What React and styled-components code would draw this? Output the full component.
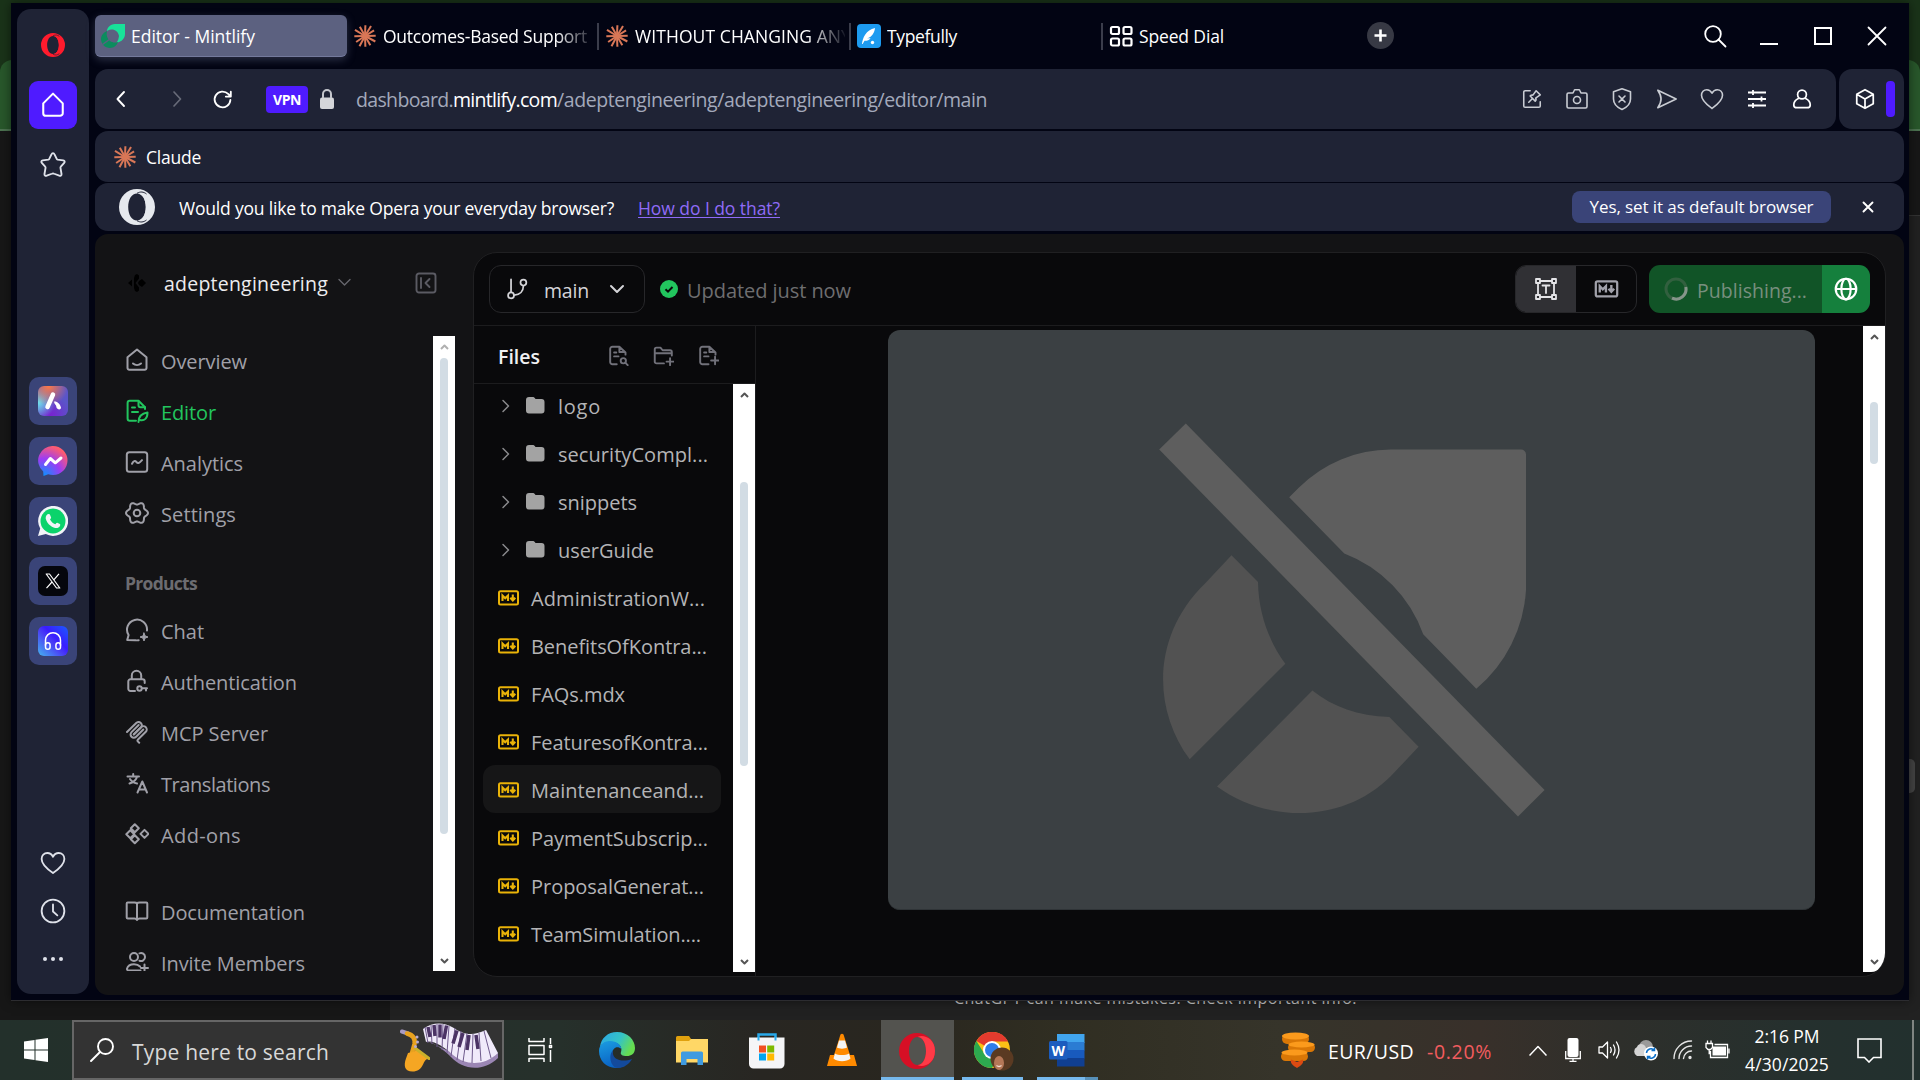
import React, { useLayoutEffect, useRef, useState } from "react";
import styled, { createGlobalStyle, css } from "styled-components";

const Global = createGlobalStyle`
  * { box-sizing: border-box; }
  html, body { margin: 0; background: #171717; overflow: hidden; }
  body { font-family: "Open Sans", "Noto Sans", sans-serif; }
  svg { display: block; flex: none; }
`;

/* ---------- text ---------- */

const TextBox = styled.span`
  display: inline-block;
  flex: none;
  white-space: pre;
  font-size: ${(p) => p.$size || 20}px;
  line-height: ${(p) => p.$line || 28}px;
  font-weight: ${(p) => p.$weight || 400};
  color: ${(p) => p.$color || "inherit"};
  text-decoration: ${(p) => (p.$underline ? "underline" : "none")};
  text-decoration-thickness: 1px;
  text-underline-offset: 2px;
  position: relative;
  top: ${(p) => p.$dy || 0}px;
`;

/* Tracks the letters so that the label takes the given width. */
function Label({ width, children, size, line, weight, color, underline, dy }) {
  const ref = useRef(null);
  const [tracking, setTracking] = useState(0);
  useLayoutEffect(() => {
    const natural = ref.current.getBoundingClientRect().width;
    const count = ref.current.textContent.length;
    if (width) setTracking((width - natural) / count);
  }, [width]);
  return (
    <TextBox
      ref={ref}
      $size={size}
      $line={line}
      $weight={weight}
      $color={color}
      $underline={underline}
      $dy={dy}
      style={{ letterSpacing: tracking }}
    >
      {children}
    </TextBox>
  );
}

/* ---------- icons ---------- */

const Line = ({ s = 24, h, vb = "0 0 24 24", w = 1.8, c = "currentColor", children, cap = "round" }) => (
  <svg width={s} height={h || s} viewBox={vb} fill="none" stroke={c} strokeWidth={w} strokeLinecap={cap} strokeLinejoin="round">
    {children}
  </svg>
);

const Burst = () => (
  <Line s={24} w={2} c="#d97757" cap="butt">
    {[2, 31, 58, 88, 118, 150, 178, 208, 236, 268, 301, 331].map((a, i) => (
      <path key={a} d={`M12 12 L12 ${i % 3 === 1 ? 0.3 : 1.3}`} transform={`rotate(${a} 12 12)`} />
    ))}
  </Line>
);

const OperaRing = ({ s, c, inner = c }) => (
  <svg width={s} height={s} viewBox="0 0 36 36">
    <path fillRule="evenodd" fill={c} d="M18 0a18 18 0 1 0 0 36a18 18 0 1 0 0-36zM18 4.500c5.200 0 8.800 5.800 8.800 13.500S23.200 31.500 18 31.500S9.200 25.700 9.200 18S12.800 4.500 18 4.500z" />
    <path fill="none" stroke="#1f2335" strokeWidth="1" d="M18 4.300c3.500-2 6.500-1.600 9.500.7M18 31.700c3.500 2 6.500 1.600 9.500-.7" />
    <path fill={inner} d="M18 4.500c5.200 0 8.800 5.800 8.800 13.500S23.200 31.500 18 31.500c9 0 14-6 14-13.500S27 4.500 18 4.500z" />
  </svg>
);

const MintFav = () => (
  <svg width="24" height="24" viewBox="0 0 24 24">
    <path d="M24 0H14C9 0 6 4 6 7c5-3 11-1 12 5c-.5 3-1 5-2.500 6.500C21 18 24 14 24 10z" fill="#18e299" />
    <path d="M6 7C2 8.500 0 12 0 15c0 5 4 9 9 9c4 0 7-3 8-6c-3 1-6 .5-8-1c-3-2.500-4-6-3-10z" fill="#0c8c5e" />
    <path d="M1.500 20.500L9 15" stroke="#5b6180" strokeWidth="1.500" />
  </svg>
);

const Feather = () => (
  <svg width="24" height="24" viewBox="0 0 24 24">
    <rect width="24" height="24" rx="4" fill="#1d9bf0" />
    <path d="M5 20c.5-6 4-14 13-16c-.5 5-3 9-8 10.500c2-.2 3-.2 3.500 0c-1.500 1.700-3.500 2.500-6 2.300L5.700 20z" fill="#fff" />
    <circle cx="15.500" cy="18.500" r="1.700" fill="#fff" />
  </svg>
);

const MdIcon = ({ s = 21, h = 16, c }) => (
  <svg width={s} height={h} viewBox="0 0 21 16" fill="none" stroke={c} strokeWidth="2">
    <rect x="1" y="1.200" width="19" height="13.300" rx="1.500" strokeWidth="2" />
    <path d="M4.500 11V5.500L7.200 8.300L10 5.500V11" strokeWidth="2.100" />
    <path d="M14.800 4.500V10M12.300 7.800l2.500 2.700L17.300 7.800" strokeWidth="2.100" />
  </svg>
);

/* Six-lobed outline of the settings gear. */
const gearOutline =
  Array.from({ length: 72 }, (_, i) => {
    const a = (i * Math.PI) / 36;
    const r = 9.700 + 1.300 * Math.cos(6 * a);
    return `${i ? "L" : "M"}${(12 + r * Math.cos(a)).toFixed(2)} ${(12 + r * Math.sin(a)).toFixed(2)}`;
  }).join("") + "z";

const NavIcons = {
  overview: (
    <>
      <path d="M2.500 9.200L12 1.500l9.500 7.700V20a1.800 1.800 0 0 1-1.800 1.800H4.300A1.800 1.800 0 0 1 2.500 20z" />
      <path d="M8 15.500c2.300 2 5.700 2 8 0" />
    </>
  ),
  editor: (
    <>
      <path d="M11 21.800H4.800A2.200 2.200 0 0 1 2.600 19.600V4A2.200 2.200 0 0 1 4.800 1.800h8.700L20 8.300V10" />
      <path d="M13.500 2.200V6.300a2 2 0 0 0 2 2H20M7 8.500h3M7 13h6" />
      <path d="M13.500 23c0-4 2-8.500 9-9.500c0 6-3 8.500-7.500 7.500" />
    </>
  ),
  analytics: (
    <>
      <rect x="1.800" y="2.200" width="20.400" height="19.600" rx="2.500" />
      <path d="M7 13.800c1.500-3 3-3.600 4.500-1.700s3 .6 5.500-2" />
    </>
  ),
  settings: (
    <>
      <circle cx="12" cy="12" r="3.300" />
      <path d={gearOutline} />
    </>
  ),
  chat: (
    <>
      <path d="M22 12.500A10 10 0 1 0 3.600 17L2.200 22l8 .2c1.200.3 2.300.2 3.500 0" />
      <path d="M19 15l1.100 2.900L23 19l-2.900 1.100L19 23l-1.100-2.900L15 19l2.900-1.100z" fill="currentColor" strokeWidth="1" />
    </>
  ),
  auth: (
    <>
      <path d="M6.800 10V6.500a4.700 4.700 0 0 1 9.400 0V10M10 22H5.500A2.200 2.200 0 0 1 3.300 19.800V12.500A2.200 2.200 0 0 1 5.500 10.300h12A2.200 2.200 0 0 1 19.700 12.500V14" />
      <circle cx="14.500" cy="19.500" r="2.200" />
      <path d="M17 19.200h5M21 19.500v2" />
    </>
  ),
  mcp: (
    <>
      <path d="M2 12L11.500 2.800a3.200 3.200 0 0 1 4.500 4.500L8.700 14.500" />
      <path d="M9 14.300L16.200 7.200a3.200 3.200 0 0 1 4.600 4.600L13 19.500c-.8.8-.8 1.300 0 2.100l1.200 1.200" />
      <path d="M13.700 5L6.500 12.100a3.200 3.200 0 0 0 4.600 4.600l7.200-7.200" />
    </>
  ),
  translate: (
    <>
      <path d="M2.500 5.500h11.500M8.200 3v2.500M4.500 12.500C9 11 11.500 8.500 12 5.500M5 8c1.500 2.500 4 4 7 4.500" />
      <path d="M12.500 21.500L17.300 10.500L22 21.500M14 18.500h6.600" />
    </>
  ),
  addons: (
    <>
      <path d="M9.500 2.500l4 4l-4 4l-4-4zM5 8.500l4 4l-4 4l-4-4zM9.500 13.500l4 4l-4 4l-4-4zM19.200 8.200l4 4l-4 4l-4-4z" transform="translate(.3 -.3)" />
    </>
  ),
  docs: (
    <>
      <path d="M12 4.500c-.5-.8-1.500-1-2.500-1H2.700a1 1 0 0 0-1 1V18.500a1 1 0 0 0 1 1H9.500c1 0 2 .7 2.500 1.500c.5-.8 1.500-1.500 2.500-1.500h6.800a1 1 0 0 0 1-1V4.500a1 1 0 0 0-1-1H14.500c-1 0-2 .2-2.500 1zM12 4.500V21" />
    </>
  ),
  invite: (
    <>
      <circle cx="9" cy="7" r="4" />
      <path d="M14.500 3.300a4 4 0 1 1 0 7.400M15.500 20.500H3.500a1.500 1.500 0 0 1-1.500-1.800c.8-3 3.600-4.500 7-4.500c2.500 0 4.700.8 6 2.300M19.500 14.500v7M16 18h7" />
    </>
  ),
};

/* ---------- desktop and the page behind the window ---------- */

const Desktop = styled.div`
  width: 1920px;
  height: 1080px;
  overflow: hidden;
  display: flex;
  flex-direction: column;
  position: relative;
`;
const Behind = styled.div`
  height: 1020px;
  display: flex;
  flex-direction: column;
`;
const BehindTop = styled.div`
  height: 131px;
  padding-top: 60px;
  background: #1a3319;
`;
const BehindToolbar = styled.div`
  height: 71px;
  border-radius: 12px 12px 0 0;
  background: #28572b;
  border-bottom: 2px solid #4c7350;
`;
const BehindBody = styled.div`
  flex: 1;
  display: flex;
  align-items: stretch;
`;
const BehindAside = styled.div`
  width: 390px;
  background: #171717;
`;
const BehindChat = styled.div`
  flex: 1;
  background: #212121;
  display: flex;
  align-items: flex-end;
  padding: 0 0 10px 564px;
`;
const BehindScroll = styled.div`
  width: 11px;
  background: #212121;
  border-top: 1px solid #333;
  margin-top: 84px;
  padding-top: 543px;
`;
const BehindThumb = styled.div`
  width: 6px;
  height: 34px;
  border-radius: 0 5px 5px 0;
  background: #444;
`;

const Window = styled.div`
  position: absolute;
  left: 11px;
  top: 3px;
  width: 1898px;
  height: 998px;
  background: #020413;
  border-bottom: 1px solid #2c2c30;
  box-shadow: 0 0 10px rgba(0, 0, 0, 0.5);
  padding: 0 5px 5px 6px;
  display: flex;
  gap: 6px;
`;

/* ---------- opera side bar ---------- */

const Rail = styled.div`
  width: 72px;
  height: 985px;
  margin-top: 6px;
  border-radius: 14px;
  background: #1f2335;
  color: #dfe2ea;
  display: flex;
  flex-direction: column;
  align-items: center;
  padding-bottom: 11px;
`;
const RailCell = styled.div`
  width: 48px;
  height: ${(p) => p.$h || 48}px;
  display: flex;
  align-items: center;
  justify-content: center;
`;
const RailHome = styled(RailCell)`
  background: #4f1bff;
  border-radius: 9px;
  margin-bottom: 12px;
  color: #fff;
`;
const RailApps = styled.div`
  margin: 188px 0 auto;
  display: flex;
  flex-direction: column;
  gap: 12px;
`;
const AppTile = styled(RailCell)`
  background: #3a4478;
  border-radius: 10px;
`;
const AppArt = styled.div`
  width: 30px;
  height: 30px;
  border-radius: ${(p) => p.$r ?? 6}px;
  background: ${(p) => p.$bg || "none"};
  display: flex;
  align-items: center;
  justify-content: center;
  overflow: hidden;
`;

/* ---------- browser chrome ---------- */

const Main = styled.div`
  width: 1809px;
  display: flex;
  flex-direction: column;
`;
const TabStrip = styled.div`
  height: 66px;
  padding-top: 12px;
  display: flex;
  color: #fff;
`;
const Tab = styled.div`
  width: 252px;
  height: 42px;
  padding-left: 6px;
  display: flex;
  align-items: center;
  gap: 6px;
  margin-right: ${(p) => (p.$last ? 12 : 0)}px;
  ${(p) =>
    p.$active &&
    css`
      background: #5c6180;
      border-radius: 6px;
      border-bottom: 1px solid #747a9c;
      box-shadow: 0 3px 9px rgba(92, 97, 128, 0.45);
    `}
  ${(p) =>
    p.$divided &&
    css`
      background: linear-gradient(#3b3d4b, #3b3d4b) right 0 center / 2px 27px no-repeat;
    `}
`;
const TabText = styled.div`
  width: ${(p) => (p.$fade ? 210 : 150)}px;
  overflow: hidden;
  display: flex;
  ${(p) => p.$fade && css`mask-image: linear-gradient(90deg, #000 172px, transparent 213px);`}
`;
const NewTab = styled.div`
  width: 27px;
  height: 27px;
  margin: 7px auto 0 0;
  border-radius: 50%;
  background: #373944;
  display: flex;
  align-items: center;
  justify-content: center;
`;
const Control = styled.div`
  width: 54px;
  height: 42px;
  display: flex;
  align-items: center;
  justify-content: center;
`;
const AddressRow = styled.div`
  display: flex;
  gap: 3px;
  height: 62px;
`;
const Bar = styled.div`
  height: ${(p) => p.$h}px;
  flex: ${(p) => (p.$w ? "none" : 1)};
  width: ${(p) => (p.$w ? p.$w + "px" : "auto")};
  border-radius: 13px;
  background: #1f2335;
  display: flex;
  align-items: center;
  color: #fff;
`;
const Gap = styled.div`
  flex: none;
  width: ${(p) => p.$w}px;
`;
const Push = styled.div`
  flex: 1;
`;
const Vpn = styled.div`
  width: 42px;
  height: 27px;
  border-radius: 4px;
  background: #4f1bff;
  display: flex;
  align-items: center;
  justify-content: center;
`;
const Tool = styled.div`
  width: 45px;
  display: flex;
  justify-content: center;
  color: ${(p) => (p.$bright ? "#fff" : "#c9ccd3")};
`;
const PurpleMark = styled.div`
  width: 9px;
  height: 36px;
  border-radius: 4px;
  background: #4f1bff;
`;
const BookmarkRow = styled.div`
  height: 52px;
  display: flex;
`;
const BannerRow = styled.div`
  height: 51px;
  display: flex;
`;
const BannerButton = styled.div`
  width: 259px;
  height: 32px;
  margin-bottom: 1px;
  border-radius: 8px;
  background: #3a4478;
  display: flex;
  align-items: center;
  justify-content: center;
`;

/* ---------- page ---------- */

const Page = styled.div`
  height: 761px;
  border-radius: 13px;
  background: #131315;
  display: flex;
`;
const Side = styled.div`
  width: 378px;
  padding: 0 18px 0 30px;
`;
const Org = styled.div`
  height: 102px;
  display: flex;
  align-items: center;
  padding: 0 0 5px 3px;
  color: #ececee;
`;
const SideScroll = styled.div`
  height: 635px;
  display: flex;
  justify-content: space-between;
  overflow: hidden;
`;
const Nav = styled.div`
  display: flex;
  flex-direction: column;
`;
const NavItem = styled.div`
  height: 51px;
  flex: none;
  display: flex;
  align-items: center;
  gap: 12px;
  color: ${(p) => (p.$on ? "#22c55e" : "#a0a0a8")};
  & > svg {
    margin-top: -4px;
  }
`;
const NavHeading = styled.div`
  height: 66px;
  flex: none;
  padding-top: 28px;
`;
const NavBreak = styled.div`
  height: 26px;
  flex: none;
`;
const Track = styled.div`
  width: 22px;
  flex: none;
  height: ${(p) => p.$h}px;
  background: #fff;
  border-radius: 0 0 ${(p) => p.$r || 0}px 0;
  display: flex;
  flex-direction: column;
  align-items: center;
  justify-content: space-between;
  padding: 8px 0 7px;
`;
const Thumb = styled.div`
  width: 8px;
  height: ${(p) => p.$h}px;
  margin: ${(p) => p.$top}px 1px auto 0;
  border-radius: 4px;
  background: #d2dce4;
`;

const Editor = styled.div`
  width: 1413px;
  height: 725px;
  margin-top: 18px;
  border: 1px solid #202022;
  border-radius: 24px;
  background: #09090b;
  overflow: hidden;
`;
const EditorHead = styled.div`
  height: 73px;
  border-bottom: 1px solid #1c1c1e;
  display: flex;
  align-items: center;
  padding: 0 15px 1px 15px;
`;
const Branch = styled.div`
  width: 156px;
  height: 48px;
  border: 1px solid #27272a;
  border-radius: 12px;
  display: flex;
  align-items: center;
  padding-left: 16px;
  color: #d4d4d8;
`;
const Toggle = styled.div`
  width: 122px;
  height: 48px;
  border: 1px solid #27272a;
  border-radius: 11px;
  overflow: hidden;
  display: flex;
`;
const ToggleCell = styled.div`
  flex: 1;
  display: flex;
  align-items: center;
  justify-content: center;
  background: ${(p) => (p.$on ? "#303034" : "transparent")};
  color: ${(p) => (p.$on ? "#e4e4e7" : "#a1a1aa")};
`;
const Publish = styled.div`
  width: 221px;
  height: 48px;
  border-radius: 11px;
  overflow: hidden;
  display: flex;
`;
const PublishText = styled.div`
  width: 173px;
  background: #115427;
  display: flex;
  align-items: center;
  gap: 9px;
  padding-left: 15px;
`;
const PublishGlobe = styled.div`
  flex: 1;
  background: #15803d;
  color: #fff;
  display: flex;
  align-items: center;
  justify-content: center;
`;
const EditorBody = styled.div`
  height: 651px;
  display: flex;
`;
const Files = styled.div`
  width: 282px;
  border-right: 1px solid #1c1c1e;
`;
const FilesHead = styled.div`
  height: 58px;
  border-bottom: 1px solid #1c1c1e;
  display: flex;
  align-items: center;
  padding: 1px 0 0 24px;
  color: #71717a;
`;
const FilesScroll = styled.div`
  height: 588px;
  display: flex;
  justify-content: space-between;
  overflow: hidden;
`;
const FileList = styled.div`
  width: 238px;
  margin: -3px 0 0 9px;
`;
const FileRow = styled.div`
  height: 48px;
  border-radius: 12px;
  display: flex;
  align-items: center;
  padding-left: ${(p) => (p.$folder ? 18 : 15)}px;
  background: ${(p) => (p.$on ? "#161617" : "transparent")};
  color: #b4b4b6;
  & > svg {
    margin-top: 1px;
  }
`;
const Canvas = styled.div`
  flex: 1;
  display: flex;
  justify-content: space-between;
  padding: 4px 0 0 132px;
`;
const Picture = styled.div`
  width: 927px;
  height: 580px;
  border-radius: 12px;
  background: #3b4043;
  border-bottom: 1px solid #2f3437;
  overflow: hidden;
`;
const CanvasTrack = styled.div`
  margin-top: -4px;
`;

/* ---------- taskbar ---------- */

const Taskbar = styled.div`
  height: 60px;
  display: flex;
  background: linear-gradient(90deg, #23302b 0, #26302b 560px, #282622 760px, #29261f 900px, #302e22 1060px, #36342a 1280px, #38302a 1480px, #2e2f2b 1620px, #25302e 1800px, #22302e 1920px);
  color: #fff;
`;
const Start = styled.div`
  width: 72px;
  display: flex;
  align-items: center;
  justify-content: center;
`;
const SearchBox = styled.div`
  width: 432px;
  border: 2px solid #666;
  background: #333;
  display: flex;
  align-items: center;
  padding-left: 16px;
`;
const SearchArt = styled.div`
  display: flex;
  align-items: center;
  & > svg + svg {
    margin: -8px 0 0 -7px;
  }
`;
const TaskCell = styled.div`
  width: ${(p) => p.$w || 75}px;
  height: 60px;
  flex: none;
  padding-top: ${(p) => p.$top ?? 12}px;
  padding-left: ${(p) => p.$left || 0}px;
  display: flex;
  justify-content: ${(p) => (p.$left ? "flex-start" : "center")};
  background: ${(p) =>
    p.$open
      ? `linear-gradient(#76b9ed, #76b9ed) 50% 100% / ${p.$open}px 3px no-repeat${p.$hot ? ", #53534f" : ""}`
      : "none"};
`;
const WordCell = styled.div`
  width: 61px;
  height: 60px;
  margin-left: 6px;
  border-bottom: 3px solid;
  border-image: linear-gradient(90deg, #76b9ed 47px, #5790b8 47px) 1;
  padding: 13px 0 0 12px;
`;
const Tray = styled.div`
  flex: 1;
  display: flex;
  align-items: center;
`;
const Clock = styled.div`
  width: 84px;
  display: flex;
  flex-direction: column;
  align-items: center;
`;
const ShowDesktop = styled.div`
  width: 2px;
  height: 60px;
  background: #7f8582;
`;

const folders = [
  ["logo", 43],
  ["securityCompl...", 150],
  ["snippets", 79],
  ["userGuide", 96],
];
const files = [
  ["AdministrationW...", 174],
  ["BenefitsOfKontra...", 176],
  ["FAQs.mdx", 94],
  ["FeaturesofKontra...", 177],
  ["Maintenanceand...", 173],
  ["PaymentSubscrip...", 177],
  ["ProposalGenerat...", 173],
  ["TeamSimulation....", 170],
];

function NavRow({ icon, text, width, on }) {
  return (
    <NavItem $on={on}>
      <Line s={24} w={2}>{NavIcons[icon]}</Line>
      <Label width={width}>{text}</Label>
    </NavItem>
  );
}

function ScrollTrack({ h, top, thumb, r, dim }) {
  return (
    <Track $h={h} $r={r}>
      <Line s={9} h={6} vb="0 0 9 6" w={2} c={dim ? "#b0b0b0" : "#555"} cap="butt"><path d="M1 5l3.500-3.500L8 5" /></Line>
      <Thumb $h={thumb} $top={top} />
      <Line s={9} h={6} vb="0 0 9 6" w={2} c="#555" cap="butt"><path d="M1 1l3.500 3.500L8 1" /></Line>
    </Track>
  );
}

function OperaRail() {
  return (
    <Rail>
      <RailCell $h={72}>
        <OperaRing s={24} c="#ff1b2d" />
      </RailCell>
      <RailHome>
        <Line s={26} w={1.900}><path d="M3 10.500L12 1.500l9 9V19.500a2.500 2.500 0 0 1-2.500 2.500H5.500A2.500 2.500 0 0 1 3 19.500z" /></Line>
      </RailHome>
      <RailCell>
        <Line s={28} w={1.600}><path d="M12 1.800c.5 0 1 .3 1.200.8l2 4.200c.1.300.4.500.8.600l4.800.6c1.200.2 1.600 1.300.8 2.100l-2.900 3.300c-.3.300-.4.600-.3 1l.9 5.300c.2 1.200-.8 2-1.900 1.500L13 19.500c-.6-.3-1.300-.3-2 0L6.600 21.200c-1.100.5-2.100-.3-1.900-1.500l.9-5.300c.1-.4 0-.7-.3-1L2.400 10.100c-.8-.8-.4-1.900.8-2.100L8 7.400c.4-.1.700-.3.8-.6l2-4.200c.2-.5.700-.8 1.200-.8z" /></Line>
      </RailCell>
      <RailApps>
        <AppTile>
          <AppArt $bg="radial-gradient(circle at 35% 0, #ff7a45 0, rgba(255,122,69,0) 55%), radial-gradient(circle at 0 55%, #6fe3ee 0, rgba(111,227,238,0) 50%), radial-gradient(circle at 40% 100%, #7a1fd0 0, rgba(122,31,208,0) 60%), #5a55c8">
            <svg width="30" height="30" viewBox="0 0 30 30">
              <path d="M15 8.500L9.500 21" stroke="#fff" strokeWidth="4.500" strokeLinecap="round" />
              <path d="M16 15.500c3-.5 6 2 7 6c0 3-4 2-4.500 0C18.500 19 16 18 16 15.500z" fill="#fff" />
            </svg>
          </AppArt>
        </AppTile>
        <AppTile>
          <svg width="30" height="30" viewBox="0 0 30 30">
            <defs>
              <radialGradient id="msg" cx=".2" cy="1" r="1.150">
                <stop offset="0" stopColor="#0a93ff" />
                <stop offset=".5" stopColor="#9b3cf5" />
                <stop offset=".9" stopColor="#ff5c6e" />
              </radialGradient>
            </defs>
            <path fill="url(#msg)" d="M15 0a14.500 14.500 0 0 1 0 29c-1.800 0-3.300-.3-4.800-.8L5.500 30l-.3-4.500A14.500 14.500 0 0 1 15 0z" />
            <path d="M7.500 18.500l4.800-6l5 4.300L23 12" fill="none" stroke="#fff" strokeWidth="3" strokeLinejoin="round" strokeLinecap="round" />
          </svg>
        </AppTile>
        <AppTile>
          <svg width="30" height="30" viewBox="0 0 30 30">
            <path fill="#f2f4f8" d="M0 30l2.200-7.500A15 15 0 1 1 7.800 28z" />
            <circle cx="15" cy="15" r="12.500" fill="#0bd36b" />
            <path fill="#f2f4f8" d="M10.800 8c.7 0 1 .4 1.300 1.100l1 2.400c.2.600-.9 1.700-1.100 2c1.300 2.400 3 3.800 5.300 4.800c.6-.6 1.300-1.900 2-1.600l2.600 1.300c.7.400.5 3.200-2.400 4c-3 .8-10.500-3-11.800-9.500C7.400 9.700 9.300 7.900 10.800 8z" />
          </svg>
        </AppTile>
        <AppTile>
          <AppArt $bg="#05060c" $r={7}>
            <Line s={16} vb="0 0 16 16" w={1.200} c="#fff" cap="butt">
              <path d="M1.200 1h3.300l10.300 14h-3.300zM14 .8L8.800 6.800M7 9L1.500 15.200" />
            </Line>
          </AppArt>
        </AppTile>
        <AppTile>
          <AppArt $bg="linear-gradient(45deg, #45b5f0 0, #4a3df5 45%, #3a1cff 60%, #1a5cff 100%)">
            <Line s={20} w={1.800} c="#fff">
              <path d="M3 17V11a9 9 0 0 1 18 0v6" />
              <rect x="3" y="14" width="5.500" height="8" rx="2.700" />
              <rect x="15.500" y="14" width="5.500" height="8" rx="2.700" />
            </Line>
          </AppArt>
        </AppTile>
      </RailApps>
      <RailCell>
        <Line s={26} w={1.700}><path d="M12 21.200C8 18.500 1.500 14 1.500 8.300C1.500 5 3.800 2.800 6.800 2.800c2.300 0 4.200 1.600 5.200 3.400c1-1.800 2.900-3.400 5.200-3.400c3 0 5.300 2.200 5.300 5.500c0 5.700-6.500 10.200-10.500 12.900z" /></Line>
      </RailCell>
      <RailCell>
        <Line s={26} w={1.700}><circle cx="12" cy="12" r="10.500" /><path d="M12 6v6.500l4 3.500" /></Line>
      </RailCell>
      <RailCell>
        <svg width="22" height="6" viewBox="0 0 22 6" fill="#dfe2ea"><circle cx="3" cy="3" r="2" /><circle cx="11" cy="3" r="2" /><circle cx="19" cy="3" r="2" /></svg>
      </RailCell>
    </Rail>
  );
}

function Chrome() {
  return (
    <>
      <TabStrip>
        <Tab $active><MintFav /><TabText><Label size={17.500} width={124}>Editor - Mintlify</Label></TabText></Tab>
        <Tab $divided><Burst /><TabText $fade><Label size={17.500} width={204} dy={-0.5}>Outcomes-Based Support</Label></TabText></Tab>
        <Tab $divided><Burst /><TabText $fade><Label size={17.500} width={216} dy={-0.5}>WITHOUT CHANGING ANY</Label></TabText></Tab>
        <Tab $divided><Feather /><TabText><Label size={17.500} width={70} dy={-0.5}>Typefully</Label></TabText></Tab>
        <Tab $last>
          <Line s={24} vb="0 0 24 24" w={2.200}>
            <rect x="2" y="3" width="8" height="7" rx="1.500" /><rect x="14.500" y="3" width="8" height="7" rx="1.500" />
            <rect x="2" y="14.500" width="8" height="7" rx="1.500" /><rect x="14.500" y="14.500" width="8" height="7" rx="1.500" />
          </Line>
          <TabText><Label size={17.500} width={85} dy={-0.5}>Speed Dial</Label></TabText>
        </Tab>
        <NewTab><Line s={13} vb="0 0 13 13" w={2.600} cap="butt"><path d="M6.500.5v12M.5 6.500h12" /></Line></NewTab>
        <Control><Line s={24} w={1.800}><circle cx="10" cy="10" r="7.800" /><path d="M15.500 15.500L22.500 22.500" /></Line></Control>
        <Control><Line s={20} vb="0 0 20 20" w={2} cap="butt"><path d="M1 18h18" /></Line></Control>
        <Control><Line s={20} vb="0 0 20 20" w={2}><rect x="2" y="2" width="16" height="16" strokeLinejoin="miter" /></Line></Control>
        <Control><Line s={20} vb="0 0 20 20" w={1.800}><path d="M1.500 1.500l17 17M18.500 1.500l-17 17" /></Line></Control>
      </TabStrip>
      <AddressRow>
        <Bar $h={60}>
          <Gap $w={20} />
          <Line s={11} h={18} vb="0 0 11 18" w={1.900}><path d="M9 2L2.500 9L9 16" /></Line>
          <Gap $w={46} />
          <Line s={11} h={18} vb="0 0 11 18" w={1.700} c="#676a78"><path d="M2 2l6.500 7L2 16" /></Line>
          <Gap $w={29} />
          <Line s={21} w={2.100}><path d="M21 12.500A9 9 0 1 1 18.500 5.700L20.800 8M21.500 3v5.700h-5.700" /></Line>
          <Gap $w={33} />
          <Vpn><Label size={14} weight={700} width={28} line={20} dy={1}>VPN</Label></Vpn>
          <Gap $w={12} />
          <svg width="14" height="20" viewBox="0 0 14 20"><rect y="8.500" width="14" height="11.500" rx="2" fill="#d4d5d9" /><path d="M3 9V5a4 4 0 0 1 8 0v4" fill="none" stroke="#c4c6cc" strokeWidth="2" /></svg>
          <Gap $w={22} />
          <Label size={19.500} width={97} color="#a3a9bb" dy={1}>dashboard.</Label>
          <Label size={19.500} width={104} color="#fff" dy={1}>mintlify.com</Label>
          <Label size={19.500} width={430} color="#a3a9bb" dy={1}>/adeptengineering/adeptengineering/editor/main</Label>
          <Push />
          <Tool><Line s={22} w={1.700}><path d="M10 3H4.500A1.500 1.500 0 0 0 3 4.500V19.500A1.500 1.500 0 0 0 4.500 21h15a1.500 1.500 0 0 0 1.500-1.500V15M8.500 15.500l4-4M10 8.800l5.500 5.500c1-1 .9-2.600.5-3.300L21 7.500L16.500 3L13 7.800c-1-.3-2.200 0-3 1z" /></Line></Tool>
          <Tool><Line s={24} w={1.600}><path d="M8 6l1.200-2.500a1 1 0 0 1 1-.7h3.600a1 1 0 0 1 1 .7L16 6h4.500A1.500 1.500 0 0 1 22 7.500V19.500A1.500 1.500 0 0 1 20.500 21h-17A1.500 1.500 0 0 1 2 19.500V7.500A1.500 1.500 0 0 1 3.500 6z" /><circle cx="12" cy="13" r="3.500" /></Line></Tool>
          <Tool><Line s={24} w={1.600}><path d="M12 1.800l8.500 3V12c0 5-3.500 8.300-8.500 10.500C7 20.300 3.500 17 3.500 12V4.800zM9 9l6 6M15 9l-6 6" /></Line></Tool>
          <Tool><Line s={22} w={1.800}><path d="M2 2.500L22 12L2 21.500C4 18.500 5.500 15.500 5.500 12S4 5.500 2 2.500z" /></Line></Tool>
          <Tool><Line s={24} w={1.600}><path d="M12 21.500C8 18.500 1.500 14 1.500 8.300C1.500 5 3.800 2.800 6.800 2.800c2.300 0 4.200 1.600 5.200 3.400c1-1.800 2.900-3.400 5.200-3.400c3 0 5.300 2.200 5.300 5.500c0 5.700-6.500 10.200-10.500 13.200z" /></Line></Tool>
          <Tool $bright><Line s={20} vb="0 0 20 20" w={1.800} cap="butt"><path d="M1 3.500h18M1 10h18M1 16.500h18M6 1v5M14.500 7.500v5M6 14v5" /></Line></Tool>
          <Tool $bright><Line s={22} w={1.900}><circle cx="12" cy="7" r="4.800" /><path d="M8 11.500c-3 1.500-5 4-5 7c0 2 1.500 3 3.500 3h11c2 0 3.500-1 3.500-3c0-3-2-5.500-5-7" /></Line></Tool>
          <Gap $w={12} />
        </Bar>
        <Bar $h={60} $w={65}>
          <Gap $w={15} />
          <Line s={22} w={1.900}><path d="M12 1.800l9 4.900v10.600l-9 4.900l-9-4.900V6.700zM3 6.900l9 5l9-5M12 12v10" /></Line>
          <Gap $w={10} />
          <PurpleMark />
        </Bar>
      </AddressRow>
      <BookmarkRow>
        <Bar $h={51}>
          <Gap $w={18} />
          <Burst />
          <Gap $w={9} />
          <Label size={17.500} width={55}>Claude</Label>
        </Bar>
      </BookmarkRow>
      <BannerRow>
        <Bar $h={48}>
          <Gap $w={24} />
          <OperaRing s={36} c="#e6e9ee" />
          <Gap $w={24} />
          <Label size={17.500} width={435} dy={1}>Would you like to make Opera your everyday browser?</Label>
          <Gap $w={24} />
          <Label size={17.500} width={142} color="#8f6bf7" underline dy={1}>How do I do that?</Label>
          <Push />
          <BannerButton><Label size={17} width={224}>Yes, set it as default browser</Label></BannerButton>
          <Gap $w={31} />
          <Line s={12} vb="0 0 12 12" w={1.900}><path d="M1.500 1.500l9 9M10.500 1.500l-9 9" /></Line>
          <Gap $w={30} />
        </Bar>
      </BannerRow>
    </>
  );
}

function SidePanel() {
  return (
    <Side>
      <Org>
        <svg width="18" height="18" viewBox="0 0 18 18" fill="#000"><path d="M0 9l4-3.500v7zM7 1l2-1l2 1.500v3L7.500 9l3.500 4.500v3L9 18l-2-1l-1-3V4zM11 7l3-2l4 4l-4 4l-3-2l-1-2z" /></svg>
        <Gap $w={18} />
        <Label size={19.500} weight={500} width={164} dy={1.500}>adeptengineering</Label>
        <Gap $w={9} />
        <Line s={15} h={9} vb="0 0 15 9" w={1.400} c="#66666d"><path d="M2 1.500l5.500 5.500L13 1.500" /></Line>
        <Gap $w={63} />
        <Line s={22} vb="0 0 22 22" w={1.900} c="#5b5b63"><rect x="1.500" y="1.500" width="19" height="19" rx="2.500" /><path d="M6 6v10M14.500 7l-4 4l4 4" /></Line>
      </Org>
      <SideScroll>
        <Nav>
          <NavRow icon="overview" text="Overview" width={86} />
          <NavRow icon="editor" text="Editor" width={55} on />
          <NavRow icon="analytics" text="Analytics" width={82} />
          <NavRow icon="settings" text="Settings" width={75} />
          <NavHeading><Label size={17.500} weight={700} width={72} color="#6c6c70" dy={0.5}>Products</Label></NavHeading>
          <NavRow icon="chat" text="Chat" width={43} />
          <NavRow icon="auth" text="Authentication" width={136} />
          <NavRow icon="mcp" text="MCP Server" width={107} />
          <NavRow icon="translate" text="Translations" width={109} />
          <NavRow icon="addons" text="Add-ons" width={80} />
          <NavBreak />
          <NavRow icon="docs" text="Documentation" width={144} />
          <NavRow icon="invite" text="Invite Members" width={144} />
        </Nav>
        <ScrollTrack h={635} top={8} thumb={476} dim />
      </SideScroll>
    </Side>
  );
}

const FolderShape = () => (
  <svg width="19" height="17" viewBox="0 0 19 17" fill="#a3a3a3"><path d="M0 3A3 3 0 0 1 3 0h3.500c1.500 0 2 .5 3 2h6A3 3 0 0 1 18.500 5v8.500a3 3 0 0 1-3 3H3a3 3 0 0 1-3-3z" /></svg>
);

function EditorPanel() {
  return (
    <Editor>
      <EditorHead>
        <Branch>
          <Line s={22} w={1.900}><circle cx="5.500" cy="19" r="3.200" /><circle cx="19" cy="5" r="3.200" /><path d="M5.500 1.500V15.500M19 8.500c0 6-4 10-10 10.200" /></Line>
          <Gap $w={16} />
          <Label size={19.500} width={45} weight={500} dy={2}>main</Label>
          <Gap $w={20} />
          <Line s={16} h={10} vb="0 0 16 10" w={2}><path d="M2 2l6 6l6-6" /></Line>
        </Branch>
        <Gap $w={15} />
        <svg width="18" height="18" viewBox="0 0 18 18"><circle cx="9" cy="9" r="9" fill="#22c55e" /><path d="M5.500 9.300l2.500 2.400l4.500-4.700" fill="none" stroke="#09090b" strokeWidth="2" /></svg>
        <Gap $w={9} />
        <Label size={20} width={164} color="#6e6e70" dy={2}>Updated just now</Label>
        <Push />
        <Toggle>
          <ToggleCell $on>
            <Line s={24} w={1.800}>
              <path d="M6 4h12M6 20h12M4 6v12M20 6v12" />
              <rect x="2" y="2" width="4" height="4" /><rect x="18" y="2" width="4" height="4" /><rect x="2" y="18" width="4" height="4" /><rect x="18" y="18" width="4" height="4" />
              <path d="M8.500 8.500h7M12 8.500v7.500" />
            </Line>
          </ToggleCell>
          <ToggleCell><MdIcon s={25} h={18} c="currentColor" /></ToggleCell>
        </Toggle>
        <Gap $w={12} />
        <Publish>
          <PublishText>
            <Line s={24} w={3} cap="butt"><circle cx="12" cy="12" r="10" stroke="#32603f" /><path d="M21.800 10A10 10 0 0 1 8 21.200" stroke="#85958a" /></Line>
            <Label size={19.500} width={110} color="#788f7e" dy={2}>Publishing...</Label>
          </PublishText>
          <PublishGlobe><Line s={26} w={2}><circle cx="12" cy="12" r="9.500" /><ellipse cx="12" cy="12" rx="4.300" ry="9.500" /><path d="M3 12h18" /></Line></PublishGlobe>
        </Publish>
      </EditorHead>
      <EditorBody>
        <Files>
          <FilesHead>
            <Label size={19.500} weight={600} width={42} color="#f0f0f2" dy={1.500}>Files</Label>
            <Gap $w={68} />
            <Line s={21} w={2.200}><path d="M10 22H5A2.500 2.500 0 0 1 2.500 19.500V4.500A2.500 2.500 0 0 1 5 2h8l7 6.500V11M13 2.500V8h6.500M7 8.500h2.500M7 13h5" /><circle cx="17.500" cy="18" r="3" /><path d="M20 20.500l2.500 2.500" /></Line>
            <Gap $w={24} />
            <Line s={21} w={2.200}><path d="M12.500 21H4A2 2 0 0 1 2 19V5a2 2 0 0 1 2-2h4.500L11 6h8.500a2 2 0 0 1 2 2v4M2 9.500h19M19.500 15v8M15.500 19h8" /></Line>
            <Gap $w={24} />
            <Line s={21} w={2.200}><path d="M12 22H5A2.500 2.500 0 0 1 2.500 19.500V4.500A2.500 2.500 0 0 1 5 2h8l7 6.500V11M13 2.500V8h6.500M7 8.500h2.500M7 13h5M19.500 13.500v8.500M15 17.800h8.500" /></Line>
          </FilesHead>
          <FilesScroll>
            <FileList>
              {folders.map(([name, w]) => (
                <FileRow key={name} $folder>
                  <Line s={9} h={14} vb="0 0 9 14" w={1.500} c="#8a8a8c"><path d="M2 1.500L7.500 7L2 12.500" /></Line>
                  <Gap $w={16} />
                  <FolderShape />
                  <Gap $w={13} />
                  <Label width={w} dy={2}>{name}</Label>
                </FileRow>
              ))}
              {files.map(([name, w], i) => (
                <FileRow key={name} $on={i === 4}>
                  <MdIcon c="#eab308" />
                  <Gap $w={12} />
                  <Label width={w} dy={2}>{name}</Label>
                </FileRow>
              ))}
            </FileList>
            <ScrollTrack h={588} top={84} thumb={284} />
          </FilesScroll>
        </Files>
        <Canvas>
          <Picture>
            <svg width="927" height="580" viewBox="888 330 927 580">
              <g fill="#5e5e5e">
                <path d="M1185.800 423.600L1544.600 790.100L1518 816.400L1159.200 449.500z" />
                <path d="M1289.200 497.200L1299 487.500A130 130 0 0 1 1390.700 449.500H1521a5 5 0 0 1 5 5V590A140 140 0 0 1 1476.300 688.800L1423.200 634.300A135 135 0 0 0 1344.300 553.500z" />
              </g>
              <g fill="#525252">
                <path d="M1231.500 555.300L1258 582C1258.500 612 1268 640 1285.300 663.800L1189.700 759.300C1152 708 1152 635 1205 583.400z" />
                <path d="M1312.400 690.500C1333 707 1358 716 1389.400 716.900L1418.600 746.800L1390.700 776.300C1343 824 1267 823 1217 786.500z" />
              </g>
            </svg>
          </Picture>
          <CanvasTrack><ScrollTrack h={646} top={62} thumb={62} r={14} /></CanvasTrack>
        </Canvas>
      </EditorBody>
    </Editor>
  );
}

const Saxophone = () => (
  <svg width="30" height="44" viewBox="0 0 30 44">
    <path d="M2 3.500L8 5.500" stroke="#a99bc4" strokeWidth="4" strokeLinecap="round" />
    <path d="M7 5.500c6 1.500 8.500 5 7.500 10.500L10 32" fill="none" stroke="#e8a21f" strokeWidth="4.500" strokeLinecap="round" />
    <path d="M15.500 21l13 9.500c-3 .5-4 2.500-5.500 6c-2 4.500-5.500 7-10.500 7c-8 0-9-6-6.500-13L8 25l5-1C14.500 23.500 15.500 23 15.500 21z" fill="#f5a623" />
    <path d="M15.500 20.500l13.500 10" stroke="#c9b02a" strokeWidth="3" strokeLinecap="round" />
    <g fill="#b8abd0"><circle cx="17" cy="9" r="1.500" /><circle cx="17.500" cy="14" r="1.500" /><circle cx="15.500" cy="18.500" r="1.500" /></g>
  </svg>
);

const Piano = () => {
  const keys = [[2, 4, 5, 20], [8, 2, 9, 21], [14, 1, 14, 24], [20, 1, 19, 27], [26, 3, 24, 30], [32, 5, 28, 33], [38, 8, 34, 37], [44, 10, 40, 39], [50, 11, 49, 40], [56, 10, 58, 38], [61, 8, 68, 35]];
  return (
    <svg width="76" height="46" viewBox="0 0 76 46">
      <path d="M2 17C10 19 20 26 28 34c10 11 30 17 47 1V30L30 30z" fill="#9b86b4" />
      <path d="M0 6C10-1 20-1 30 4.500C40 11 48 14 63 7L75 30C60 44 42 42 30 32C20 23 10 17 3 19z" fill="#f0eafa" />
      <g stroke="#6e5a8c" strokeWidth="1">
        {keys.map(([a, b, c, d]) => <path key={a} d={`M${a} ${b}L${c} ${d}`} />)}
      </g>
      <g stroke="#4b3365" strokeWidth="3.500">
        <path d="M5 4l2 10M11 2l1 11M17 1.500v13M23.500 2.500L21 16M34 7.500l-4 13M40 10l-4 14M46 12l-2 15M53 12l2 14" />
      </g>
    </svg>
  );
};

function WindowsTaskbar() {
  return (
    <Taskbar>
      <Start><svg width="24" height="24" viewBox="0 0 24 24" fill="#fff"><path d="M0 3.500l10.500-1.500V11.500H0zM11.500 1.800L24 0v11.500H11.500zM0 12.500h10.500V22L0 20.500zM11.500 12.500H24V24l-12.500-1.800z" /></svg></Start>
      <SearchBox>
        <Line s={24} w={1.900}><circle cx="15.500" cy="8.500" r="7.500" /><path d="M10 14L1 23" /></Line>
        <Gap $w={18} />
        <Label size={21} width={197} color="#d8d8d8" dy={1.500}>Type here to search</Label>
        <Gap $w={71} />
        <SearchArt>
          <Saxophone />
          <Piano />
        </SearchArt>
      </SearchBox>
      <TaskCell $w={72} $top={18}>
        <Line s={25} h={24} vb="0 0 25 24" w={1.500} cap="butt"><path d="M1 0v3.500h15V0M1 7.500h15v9H1zM1 24v-3.500h15V24M22.500 0v6M22.500 12v12" /><rect x="21.500" y="7.500" width="2" height="2" /></Line>
      </TaskCell>
      <TaskCell $left={23} $w={79}>
        <svg width="36" height="36" viewBox="0 0 36 36">
          <defs>
            <linearGradient id="eg1" x1="0" x2="1" y2=".4"><stop offset="0" stopColor="#2aa5e8" /><stop offset=".6" stopColor="#35c3c5" /><stop offset="1" stopColor="#66dd50" /></linearGradient>
            <linearGradient id="eg2" y2="1" x2=".3"><stop stopColor="#1b9de2" /><stop offset="1" stopColor="#0a63c4" /></linearGradient>
          </defs>
          <path d="M1 15C2 6 9 0 18 0c11 0 18 8 18 16c0 6-4 8-8 8c-5 0-7-1.500-6-4c1.500-4-1-8-6-9.500C10 9 4 10 1 15z" fill="url(#eg1)" />
          <path d="M0 19C0 12 6 9 11 9c7 0 11 4 11.500 8C18 13 13 16 13.500 22c.5 7 6 12 12 12c-14 6-25.500-3-25.500-15z" fill="url(#eg2)" />
          <path d="M14 18c-2 9 8 13 19 9c-3 6-10 10-17 8.500C11 32 9.500 23 14 18z" fill="#134a9c" />
        </svg>
      </TaskCell>
      <TaskCell $top={16} $left={21}>
        <svg width="32" height="29" viewBox="0 0 32 29"><path d="M0 1.500A1.500 1.500 0 0 1 1.500 0H13l2 3v4H0z" fill="#e0a10e" /><path d="M0 5h13l2-2h17v23.500H0z" fill="#ffd766" /><path d="M5 29V17a1.500 1.500 0 0 1 1.500-1.500h19A1.500 1.500 0 0 1 27 17v12h-5.500v-6h-11v6z" fill="#3f9be0" /></svg>
      </TaskCell>
      <TaskCell $left={19}>
        <svg width="36" height="37" viewBox="0 0 36 37"><path d="M9.500 9V2.500h17V9" fill="none" stroke="#29a9ea" strokeWidth="2.500" /><path d="M0 5.500h35.500V32a4.500 4.500 0 0 1-4.500 4.500H4.500A4.500 4.500 0 0 1 0 32z" fill="#f5f5f7" /><path d="M9.500 5v3.500M26.500 5v3.500" stroke="#29a9ea" strokeWidth="2" /><path d="M10 13.500h7v7h-7z" fill="#f25022" /><path d="M18.200 13.500h7v7h-7z" fill="#7fba00" /><path d="M10 21.500h7v7h-7z" fill="#00a4ef" /><path d="M18.200 21.500h7v7h-7z" fill="#ffb900" /></svg>
      </TaskCell>
      <TaskCell $top={13} $w={76} $left={22}>
        <svg width="30" height="34" viewBox="0 0 30 34"><path d="M3 22h24l3 11H0z" fill="#ff8a00" /><path d="M13.500 1.500q1.500-1.500 3 0L24 25c-3 4-15 4-18 0z" fill="#ff8a00" /><path d="M12 7.500h6l2 7c-2 1.500-8 1.500-10 0zM8 20.500c3 2 11 2 14 0l1.500 5c-4 3.500-13 3.500-17 0z" fill="#f5f5f5" /></svg>
      </TaskCell>
      <TaskCell $w={73} $top={13} $left={18} $open={73} $hot>
        <svg width="36" height="36" viewBox="0 0 36 36">
          <path fill="#d60f25" fillRule="evenodd" d="M18 0a18 18 0 1 0 0 36a18 18 0 1 0 0-36zM18.500 4c5 0 8.500 6 8.500 14s-3.500 14-8.500 14S10 26 10 18S13.500 4 18.500 4z" />
          <path fill="#ff3a47" d="M18.500 4C24 1 36 5 36 18s-12 17-17.500 14C23.500 32 27 26 27 18S23.500 4 18.500 4z" />
        </svg>
      </TaskCell>
      <TaskCell $w={77} $open={61} $left={20}>
        <svg width="40" height="40" viewBox="0 0 40 40">
          <circle cx="18" cy="18" r="18" fill="#fbc116" />
          <path d="M18 18L2.400 9A18 18 0 0 1 34 9.500H18z" fill="#e33b2e" />
          <path d="M2.400 9A18 18 0 0 0 18 36L26 22L10.500 22z" fill="#2da94f" />
          <circle cx="18" cy="18" r="9" fill="#fff" /><circle cx="18" cy="18" r="7" fill="#2f7de9" />
          <circle cx="28" cy="27" r="11.500" fill="#5a3a22" /><ellipse cx="25" cy="31" rx="5" ry="7" fill="#b57757" />
          <path d="M22.500 33.500q2.500 2 5 0" stroke="#f3ded4" fill="none" strokeWidth="1.300" />
        </svg>
      </TaskCell>
      <WordCell>
        <svg width="36" height="34" viewBox="0 0 36 34">
          <path d="M8 1h27.500v9H8z" fill="#41a5ee" /><path d="M8 9h27.500v8.500H8z" fill="#2b7cd3" /><path d="M8 17h27.500v8.500H8z" fill="#185abd" /><path d="M8 25h27.500v8.500H8z" fill="#103f91" />
          <rect y="8" width="18.500" height="18.500" rx="1.500" fill="#1b5cbe" />
          <text x="9.200" y="22.500" textAnchor="middle" fill="#fff" fontSize="14" fontWeight="700">W</text>
        </svg>
      </WordCell>
      <Gap $w={183} />
      <Tray>
        <svg width="34" height="36" viewBox="0 0 34 36">
          <g fill="#d97706"><rect x="1" y="2" width="27" height="10" rx="5" /><rect x="7" y="11" width="27" height="9" rx="4.500" /><rect x="0" y="20" width="27" height="9" rx="4.500" /></g>
          <g fill="#fb9a1c"><ellipse cx="14.500" cy="4" rx="13.500" ry="3.500" /><ellipse cx="20.500" cy="12.500" rx="13" ry="3" /><ellipse cx="13.500" cy="20.500" rx="13" ry="3" /></g>
          <path d="M10 27.500l6 2.500l6-2.500c1 4-2 6-6 8.500c-4-2.500-7-4.500-6-8.500z" fill="#dc4a12" />
        </svg>
        <Gap $w={13} />
        <Label size={19.500} width={86} dy={1.500}>EUR/USD</Label>
        <Gap $w={13} />
        <Label size={19.500} width={65} color="#f25c5f" dy={1.500}>-0.20%</Label>
        <Gap $w={37} />
        <Line s={18} h={11} vb="0 0 18 11" w={1.500} cap="butt"><path d="M.500 10.500L9 1.500l8.500 9" /></Line>
        <Gap $w={18} />
        <svg width="16" height="24" viewBox="0 0 16 24"><rect x="2.500" width="11" height="19" rx="2" fill="#fff" /><path d="M.700 13v7.500h14.600V13M8 20.500V23M4.500 23.500h7" fill="none" stroke="#fff" strokeWidth="1.300" /></svg>
        <Gap $w={17} />
        <Line s={23} h={20} vb="0 0 23 20" w={1.300}><path d="M1 7h3.500l5-5v16l-5-5H1zM12.500 7.500q1.500 2.500 0 5M15.500 5q3 5 0 10M18.500 2q5 8 0 16" /></Line>
        <Gap $w={12} />
        <svg width="25" height="22" viewBox="0 0 25 22"><circle cx="13" cy="8" r="7" fill="#9a9a9a" /><path d="M4 17a5 5 0 0 1 0-9c2-5 8-3 9 1l5 2v6z" fill="#d4d4d4" /><circle cx="18" cy="14.500" r="7" fill="#fff" /><path d="M13.500 14a4.500 4.500 0 0 1 8-2.500M22.500 15a4.500 4.500 0 0 1-8 2.500M21.500 8.500v3h-3M14.500 20.500v-3h3" fill="none" stroke="#0a6fc9" strokeWidth="1.500" /></svg>
        <Gap $w={15} />
        <Line s={20} h={20} vb="0 0 20 20" w={1.400} c="#e6e6e6"><path d="M1 18.500A17.500 17.500 0 0 1 18.500 1M6 18.500A12.500 12.500 0 0 1 18.500 6M10.500 18.500A8 8 0 0 1 18.500 11" /><circle cx="17" cy="17.500" r="1" fill="#fff" /></Line>
        <Gap $w={12} />
        <svg width="25" height="20" viewBox="0 0 25 20"><rect x="7.500" y="6.500" width="13.500" height="9" fill="#fff" /><path d="M5.500 11v6.500h17V4.500H9.500M24 8.500v5M4.200 9.500v4h1.300M1 3.500h6.500v4L5.500 9.500H3L1 7.500zM2.500 3.500V.5M6 3.500V.5" fill="none" stroke="#fff" strokeWidth="1.300" /></svg>
        <Gap $w={15} />
        <Clock>
          <Label size={17.500} width={65}>2:16 PM</Label>
          <Label size={17.500} width={84}>4/30/2025</Label>
        </Clock>
        <Gap $w={28} />
        <Line s={25} h={25} vb="0 0 25 25" w={1.600} cap="butt"><path d="M1 1h23v18.500h-7.500l-4.500 4.500l-4.500-4.500H1z" strokeLinejoin="miter" /></Line>
      </Tray>
      <ShowDesktop />
      <Gap $w={6} />
    </Taskbar>
  );
}

export default function App() {
  return (
    <>
      <Global />
      <Desktop>
        <Behind>
          <BehindTop><BehindToolbar /></BehindTop>
          <BehindBody>
            <BehindAside />
            <BehindChat><Label size={16} line={24} width={403} color="#c9c9c9">ChatGPT can make mistakes. Check important info.</Label></BehindChat>
            <BehindScroll><BehindThumb /></BehindScroll>
          </BehindBody>
        </Behind>
        <WindowsTaskbar />
        <Window>
          <OperaRail />
          <Main>
            <Chrome />
            <Page>
              <SidePanel />
              <EditorPanel />
            </Page>
          </Main>
        </Window>
      </Desktop>
    </>
  );
}
